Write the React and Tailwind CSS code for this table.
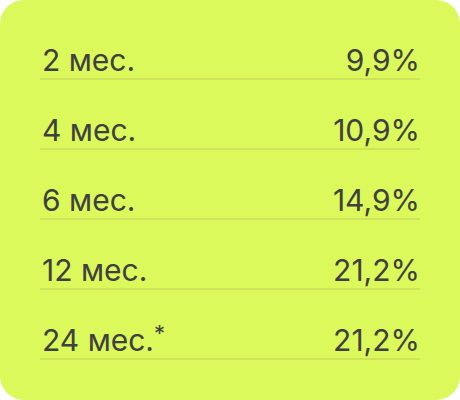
import React from "react";

const rates = [
  { term: "2 мес.", rate: "9,9%" },
  { term: "4 мес.", rate: "10,9%" },
  { term: "6 мес.", rate: "14,9%" },
  { term: "12 мес.", rate: "21,2%" },
  { term: "24 мес.", rate: "21,2%", note: true },
];

const App = () => {
  return (
    <div className="w-[460px] h-[400px] bg-white">
      <div
        className="w-full h-full rounded-[24px] bg-[#dbf95b] px-[40px] pt-[10px] text-[#404040]"
        style={{ fontFamily: "Inter, 'Noto Sans', sans-serif" }}
      >
        {rates.map((r) => (
          <div
            key={r.term}
            className="h-[70px] flex items-end justify-between border-b-2 border-[#cee35a]"
          >
            <span className="text-[30px] leading-[36px] pl-[2px]">
              {r.term}
              {r.note && <span className="text-[22px] leading-[22px] align-top">*</span>}
            </span>
            <span className="text-[30px] leading-[36px]">{r.rate}</span>
          </div>
        ))}
      </div>
    </div>
  );
};

export default App;
